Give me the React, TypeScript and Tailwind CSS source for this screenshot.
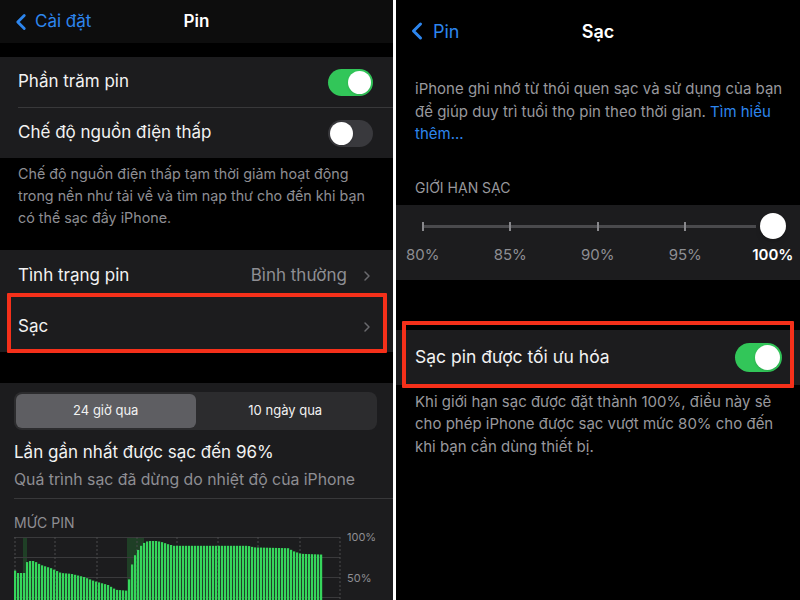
import { ChevronLeft, ChevronRight } from "lucide-react";

const pts: [number, number][] = [
  [14, 58], [17, 55], [23, 55], [25, 68], [28, 70], [33, 70], [40, 65], [50, 61],
  [60, 55], [70, 54], [83, 50], [93, 45], [107, 40], [115, 34], [125, 33], [127, 40],
  [130, 61], [133, 75], [138, 86], [142, 92], [147, 95], [155, 95], [160, 94], [167, 91],
  [173, 89], [247, 89], [253, 87], [287, 86], [293, 82], [300, 79], [322, 78],
];

function levelAt(x: number) {
  for (let i = 0; i < pts.length - 1; i++) {
    const [x0, y0] = pts[i];
    const [x1, y1] = pts[i + 1];
    if (x >= x0 && x <= x1) return y0 + ((y1 - y0) * (x - x0)) / (x1 - x0 || 1);
  }
  return pts[pts.length - 1][1];
}

const bars: { x: number; h: number }[] = [];
for (let x = 14; x <= 320; x += 3) bars.push({ x: x - 14, h: levelAt(x) * 0.8 });

function Toggle({ on, size }: { on: boolean; size: "sm" | "md" }) {
  const track = size === "sm" ? "w-[45px] h-[27px]" : "w-[47px] h-[29px]";
  const knob = size === "sm" ? "w-[23px] h-[23px]" : "w-[25px] h-[25px]";
  return (
    <div
      className={`${track} shrink-0 rounded-full p-[2px] flex ${on ? "bg-[#32c659] justify-end" : "bg-[#39393d] justify-start"}`}
    >
      <div className={`${knob} rounded-full bg-white shadow`} />
    </div>
  );
}

function BatteryChart() {
  return (
    <svg width="330" height="80" viewBox="0 0 330 80" className="block shrink-0">
      <rect x="9" y="0" width="4" height="80" fill="#1f3f26" />
      <rect x="113" y="0" width="17" height="80" fill="#1f3f26" />
      {[0, 20, 40, 60].map((y) => (
        <line key={y} x1="0" x2="326" y1={y + 0.5} y2={y + 0.5} stroke="#3a3a3c" strokeWidth="1" />
      ))}
      {[1, 41, 83, 123, 163, 204, 244, 286, 326].map((x) => (
        <line key={x} x1={x} x2={x} y1="0" y2="80" stroke="#4a4a4c" strokeWidth="1" strokeDasharray="2 2" />
      ))}
      {bars.map((b) => (
        <rect key={b.x} x={b.x} y={80 - b.h} width="2.2" height={b.h} fill="#36d65c" />
      ))}
    </svg>
  );
}

function LeftScreen() {
  return (
    <div className="w-[393px] h-[600px] shrink-0 bg-black overflow-hidden">
      {/* Nav */}
      <div className="h-[43px] bg-[#0d0d0d] flex items-center relative px-[8px]">
        <div className="flex items-center text-[#2d86ee]">
          <ChevronLeft size={26} strokeWidth={2.6} />
          <span className="text-[17px] ml-[1px]">Cài đặt</span>
        </div>
        <div className="absolute inset-0 flex items-center justify-center pointer-events-none">
          <span className="text-[17px] font-semibold text-white">Pin</span>
        </div>
      </div>
      <div className="h-[14px]" />

      {/* Group 1 */}
      <div className="bg-[#1c1c1e]">
        <div className="h-[50px] flex items-center justify-between pl-[18px] pr-[20px]">
          <span className="text-[17px] text-[#f2f2f2]">Phần trăm pin</span>
          <Toggle on size="sm" />
        </div>
        <div className="h-px bg-[#38383a] ml-[18px]" />
        <div className="h-[50px] flex items-center justify-between pl-[18px] pr-[20px]">
          <span className="text-[17px] text-[#f2f2f2]">Chế độ nguồn điện thấp</span>
          <Toggle on={false} size="sm" />
        </div>
      </div>
      <div className="h-[92px] pt-[5px] pl-[18px] pr-[20px] text-[14.3px] leading-[22px] text-[#8e8e93]">
        Chế độ nguồn điện thấp tạm thời giảm hoạt động trong nền như tải về và tìm nạp thư cho đến khi bạn có thể sạc đầy iPhone.
      </div>

      {/* Group 2 */}
      <div className="bg-[#1c1c1e]">
        <div className="h-[51px] flex items-center justify-between pl-[18px] pr-[18px]">
          <span className="text-[17px] text-[#f2f2f2]">Tình trạng pin</span>
          <div className="flex items-center gap-[12px] text-[#8e8e93]">
            <span className="text-[17px]">Bình thường</span>
            <ChevronRight size={16} strokeWidth={2.2} className="text-[#6a6a6e]" />
          </div>
        </div>
        <div className="h-[51px] flex items-center justify-between pl-[18px] pr-[18px] relative">
          <span className="text-[17px] text-[#f2f2f2]">Sạc</span>
          <ChevronRight size={16} strokeWidth={2.2} className="text-[#6a6a6e]" />
          <div className="absolute left-[7px] right-[6px] top-[-8px] bottom-[-1px] border-[4px] border-[#f5301a] rounded-[1px] pointer-events-none" />
        </div>
      </div>
      <div className="h-[31px]" />

      {/* Group 3 */}
      <div className="bg-[#1c1c1e] h-[217px] pt-[9px]">
        <div className="ml-[14px] mr-[16px] h-[38px] rounded-[8px] bg-[#2c2c2e] p-[2px] flex">
          <div className="flex-1 rounded-[6px] bg-[#5e5e62] flex items-center justify-center text-[13px] text-[#f2f2f2]">
            24 giờ qua
          </div>
          <div className="flex-1 flex items-center justify-center text-[13px] text-[#f2f2f2]">
            10 ngày qua
          </div>
        </div>
        <div className="pl-[14px] mt-[9px]">
          <div className="text-[17px] leading-[26px] text-[#f2f2f2]">Lần gần nhất được sạc đến 96%</div>
          <div className="text-[15.8px] leading-[26px] text-[#8e8e93] mt-[2px]">
            Quá trình sạc đã dừng do nhiệt độ của iPhone
          </div>
          <div className="h-px bg-[#38383a] mt-[5px]" />
          <div className="text-[14px] text-[#8e8e93] mt-[15px] leading-[18px]">MỨC PIN</div>
          <div className="flex mt-[5px]">
            <BatteryChart />
            <div className="flex flex-col pl-[3px] text-[11px] leading-[14px] text-[#8e8e93]">
              <span className="-mt-[7px]">100%</span>
              <span className="mt-[27px]">50%</span>
            </div>
          </div>
        </div>
      </div>
    </div>
  );
}

const limits = ["80%", "85%", "90%", "95%", "100%"];

function RightScreen() {
  return (
    <div className="w-[404px] h-[600px] shrink-0 bg-black overflow-hidden">
      {/* Nav */}
      <div className="h-[62px] flex items-center relative px-[7px]">
        <div className="flex items-center text-[#2d86ee]">
          <ChevronLeft size={28} strokeWidth={2.6} />
          <span className="text-[18px] ml-[2px]">Pin</span>
        </div>
        <div className="absolute inset-0 flex items-center justify-center pointer-events-none">
          <span className="text-[18px] font-semibold text-white">Sạc</span>
        </div>
      </div>
      <div className="pl-[19px] pr-[10px] pt-[16px] text-[15px] leading-[22.5px] text-[#98989d]">
        iPhone ghi nhớ từ thói quen sạc và sử dụng của bạn để giúp duy trì tuổi thọ pin theo thời gian.{" "}
        <span className="text-[#2d86ee]">Tìm hiểu thêm...</span>
      </div>
      <div className="pl-[19px] mt-[33px] text-[14px] leading-[18px] text-[#98989d]">GIỚI HẠN SẠC</div>

      {/* Slider group */}
      <div className="bg-[#1c1c1e] h-[75px] mt-[8px] pt-[8px]">
        <div className="flex ml-[-17px] relative">
          <div className="absolute left-[44px] right-[44px] top-[12px] h-[3px] bg-[#4a4a4d]" />
          {limits.map((l, i) => (
            <div key={l} className="w-[87.5px] shrink-0 flex flex-col items-center">
              <div className="h-[27px] flex items-center relative">
                {i < 4 ? (
                  <div className="w-[2px] h-[9px] bg-[#88888c]" />
                ) : (
                  <div className="w-[26px] h-[26px] rounded-full bg-white shadow-md" />
                )}
              </div>
              <span
                className={`text-[15px] leading-[20px] mt-[5px] ${i === 4 ? "text-white font-semibold" : "text-[#8e8e93]"}`}
              >
                {l}
              </span>
            </div>
          ))}
        </div>
      </div>
      <div className="h-[50px]" />

      {/* Optimized group */}
      <div className="bg-[#1c1c1e] h-[55px] flex items-center justify-between pl-[19px] pr-[18px] relative">
        <span className="text-[17.5px] text-[#f2f2f2]">Sạc pin được tối ưu hóa</span>
        <Toggle on size="md" />
        <div className="absolute left-[6px] right-[6px] top-[-9px] bottom-[-3px] border-[4px] border-[#f5301a] rounded-[1px] pointer-events-none" />
      </div>
      <div className="pl-[19px] pr-[14px] pt-[6px] text-[15px] leading-[22.5px] text-[#98989d]">
        Khi giới hạn sạc được đặt thành 100%, điều này sẽ cho phép iPhone được sạc vượt mức 80% cho đến khi bạn cần dùng thiết bị.
      </div>
    </div>
  );
}

export default function App() {
  return (
    <div className="w-[800px] h-[600px] bg-white flex gap-[3px] overflow-hidden font-[Inter,'Noto_Sans',sans-serif]">
      <LeftScreen />
      <RightScreen />
    </div>
  );
}
